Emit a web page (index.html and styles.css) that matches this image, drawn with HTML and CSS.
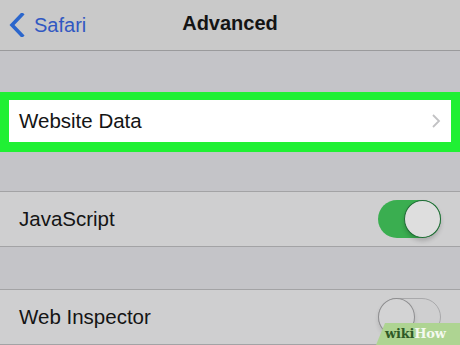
FILE: index.html
```html
<!DOCTYPE html>
<html>
<head>
<meta charset="utf-8">
<link rel="stylesheet" href="styles.css">
</head>
<body>
<div class="screen">
  <header class="navbar">
    <div class="back">
      <svg class="back-chevron" width="18" height="24" viewBox="0 0 18 24"><path d="M14 1.5 L4 12 L14 22.5" fill="none" stroke="#2b66cc" stroke-width="3.6" stroke-linecap="square" stroke-linejoin="miter"/></svg>
      <span class="back-label">Safari</span>
    </div>
    <div class="title">Advanced</div>
  </header>
  <div class="gap gap-top"></div>
  <div class="highlight">
    <div class="row row-white">
      <span class="label">Website Data</span>
      <svg class="chevron" width="10" height="14" viewBox="0 0 10 14"><path d="M2 1 L8 7 L2 13" fill="none" stroke="#c2c2c4" stroke-width="1.8"/></svg>
    </div>
  </div>
  <div class="gap gap-mid"></div>
  <div class="row row-grey">
    <span class="label">JavaScript</span>
    <div class="toggle on"><div class="knob"></div></div>
  </div>
  <div class="gap gap-mid2"></div>
  <div class="row row-grey">
    <span class="label">Web Inspector</span>
    <div class="toggle off"><div class="knob"></div></div>
  </div>
  <div class="wikihow"><span class="wiki">wiki</span><span class="how">How</span></div>
</div>
</body>
</html>
```
FILE: styles.css
```css
* { box-sizing: border-box; }
html, body { margin: 0; padding: 0; }
body {
  width: 460px;
  height: 345px;
  overflow: hidden;
  background: #c4c4c8;
  font-family: "Liberation Sans", Arial, sans-serif;
}
.screen {
  position: relative;
  width: 460px;
  height: 345px;
  overflow: hidden;
  display: flex;
  flex-direction: column;
}
.navbar {
  position: relative;
  height: 51px;
  flex: none;
  background: #c9c9c9;
  border-bottom: 1px solid #9a9a9c;
  display: flex;
  align-items: center;
  justify-content: center;
}
.back {
  position: absolute;
  left: 8px;
  top: 13px;
  display: flex;
  align-items: center;
  gap: 8px;
}
.back-chevron { display: block; }
.back-label {
  font-size: 20px;
  color: #3158c2;
  line-height: 24px;
}
.title {
  font-size: 20px;
  font-weight: bold;
  color: #141414;
  margin-top: -3px;
}
.gap { flex: none; }
.gap-top { height: 41px; }
.highlight {
  flex: none;
  border-style: solid;
  border-color: #20f034;
  border-width: 8px 9px 10px 9px;
  height: 60px;
}
.row {
  display: flex;
  align-items: center;
  justify-content: space-between;
  padding: 0 19px;
  flex: none;
}
.row-white {
  height: 42px;
  background: #ffffff;
  padding: 0 10px 0 10px;
}
.row-grey {
  height: 56px;
  background: #cfcfd0;
  border-top: 1px solid #a3a3a5;
  border-bottom: 1px solid #a3a3a5;
}
.label {
  font-size: 20.5px;
  color: #141414;
}
.gap-mid { height: 39px; }
.gap-mid2 { height: 42px; }
.chevron { display: block; }
.toggle {
  position: relative;
  width: 63px;
  height: 38px;
  border-radius: 19px;
}
.toggle.on {
  background: #3aae50;
}
.toggle.off {
  background: #cfcfd0;
  border: 1.5px solid #a9a9ab;
}
.knob {
  position: absolute;
  top: 0;
  width: 37px;
  height: 38px;
  border-radius: 50%;
  background: #dedede;
}
.toggle.on .knob {
  right: 0;
  border: 1.5px solid #1f6b35;
  box-shadow: 0 3px 4px rgba(0,0,0,0.18);
}
.toggle.off .knob {
  left: -1.5px;
  top: -1.5px;
  background: #d3d3d4;
  border: 1.5px solid #8e8e90;
  box-shadow: 0 3px 4px rgba(0,0,0,0.12);
}
.wikihow {
  position: absolute;
  right: 0;
  bottom: 0;
  width: 84px;
  height: 22px;
  background: #aed492;
  clip-path: polygon(9px 0, 100% 0, 100% 100%, 0 100%);
  font-family: "DejaVu Serif", "Liberation Serif", serif;
  font-weight: bold;
  font-size: 13px;
  line-height: 22px;
  padding-left: 9px;
  letter-spacing: -0.2px;
}
.wiki { color: #2f5a26; }
.how { color: #f4f9ef; }
```
